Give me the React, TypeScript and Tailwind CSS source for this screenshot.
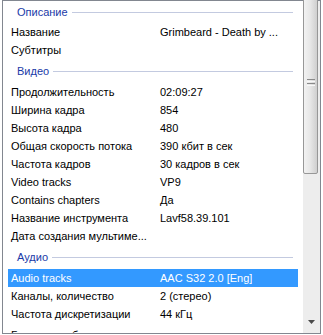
const FONT = '"Liberation Sans", Arial, sans-serif'

type Item =
  | { kind: 'group'; title: string; first?: boolean }
  | { kind: 'row'; label: string; value?: string; selected?: boolean }

const items: Item[] = [
  { kind: 'group', title: 'Описание', first: true },
  { kind: 'row', label: 'Название', value: 'Grimbeard - Death by ...' },
  { kind: 'row', label: 'Субтитры' },
  { kind: 'group', title: 'Видео' },
  { kind: 'row', label: 'Продолжительность', value: '02:09:27' },
  { kind: 'row', label: 'Ширина кадра', value: '854' },
  { kind: 'row', label: 'Высота кадра', value: '480' },
  { kind: 'row', label: 'Общая скорость потока', value: '390 кбит в сек' },
  { kind: 'row', label: 'Частота кадров', value: '30 кадров в сек' },
  { kind: 'row', label: 'Video tracks', value: 'VP9' },
  { kind: 'row', label: 'Contains chapters', value: 'Да' },
  { kind: 'row', label: 'Название инструмента', value: 'Lavf58.39.101' },
  { kind: 'row', label: 'Дата создания мультиме...' },
  { kind: 'group', title: 'Аудио' },
  { kind: 'row', label: 'Audio tracks', value: 'AAC S32 2.0 [Eng]', selected: true },
  { kind: 'row', label: 'Каналы, количество', value: '2 (стерео)' },
  { kind: 'row', label: 'Частота дискретизации', value: '44 кГц' },
]

function GroupHeader({ title, first }: { title: string; first?: boolean }) {
  return (
    <div className={first ? 'flex h-[22px] items-center pl-[14px] pr-[10px]' : 'flex h-[24px] items-center pl-[14px] pr-[10px]'}>
      <span className="text-[#1a3aa8]">{title}</span>
      <div className="ml-[4px] h-px flex-1 bg-[#c3cae0]" />
    </div>
  )
}

function Row({ label, value, selected }: { label: string; value?: string; selected?: boolean }) {
  return (
    <div
      className={
        selected
          ? 'mx-[5px] flex h-[18px] items-center bg-[#3399ff] text-white'
          : 'mx-[5px] flex h-[18px] items-center text-black'
      }
    >
      <div className="w-[152px] shrink-0 whitespace-nowrap pl-[3px]">{label}</div>
      <div className="whitespace-nowrap">{value}</div>
    </div>
  )
}

function ScrollBar() {
  return (
    <div className="relative flex w-[17px] shrink-0 flex-col bg-[#ededed]">
      {/* thumb, top part scrolled out of view */}
      <div className="relative -mt-[3px] h-[176px] w-[15px] rounded-[2px] border border-[#979797] bg-gradient-to-r from-[#f2f2f2] via-[#e6e6e6] to-[#cfcfcf]">
        <div className="absolute left-[3px] top-[80px] flex w-[8px] flex-col gap-[1px]">
          <div className="h-px bg-[#8a8a8a]" />
          <div className="h-px bg-[#f8f8f8]" />
          <div className="h-px bg-[#8a8a8a]" />
          <div className="h-px bg-[#f8f8f8]" />
        </div>
      </div>
      <div className="flex-1" />
      <div className="flex h-[17px] items-center justify-center pb-[5px]">
        <svg width="7" height="4" viewBox="0 0 7 4">
          <path d="M0 0h7L3.5 4z" fill="#4a4a4a" />
        </svg>
      </div>
    </div>
  )
}

export default function App() {
  return (
    <div className="h-[335px] w-[323px] overflow-hidden bg-white text-[11px] leading-none" style={{ fontFamily: FONT }}>
      <div className="ml-[2px] flex h-[334px] w-[319px] border border-[#828790] bg-white">
        <div className="flex-1 overflow-hidden">
          {items.map((it, i) =>
            it.kind === 'group' ? (
              <GroupHeader key={i} title={it.title} first={it.first} />
            ) : (
              <Row key={i} label={it.label} value={it.value} selected={it.selected} />
            )
          )}
          {/* next row, scrolled almost out of view: only glyph tops show */}
          <div className="mx-[5px] flex h-[18px] items-start pt-[7px] text-black">
            <div className="w-[152px] shrink-0 whitespace-nowrap pl-[3px]">Битовая глубина</div>
          </div>
        </div>
        <ScrollBar />
      </div>
    </div>
  )
}
